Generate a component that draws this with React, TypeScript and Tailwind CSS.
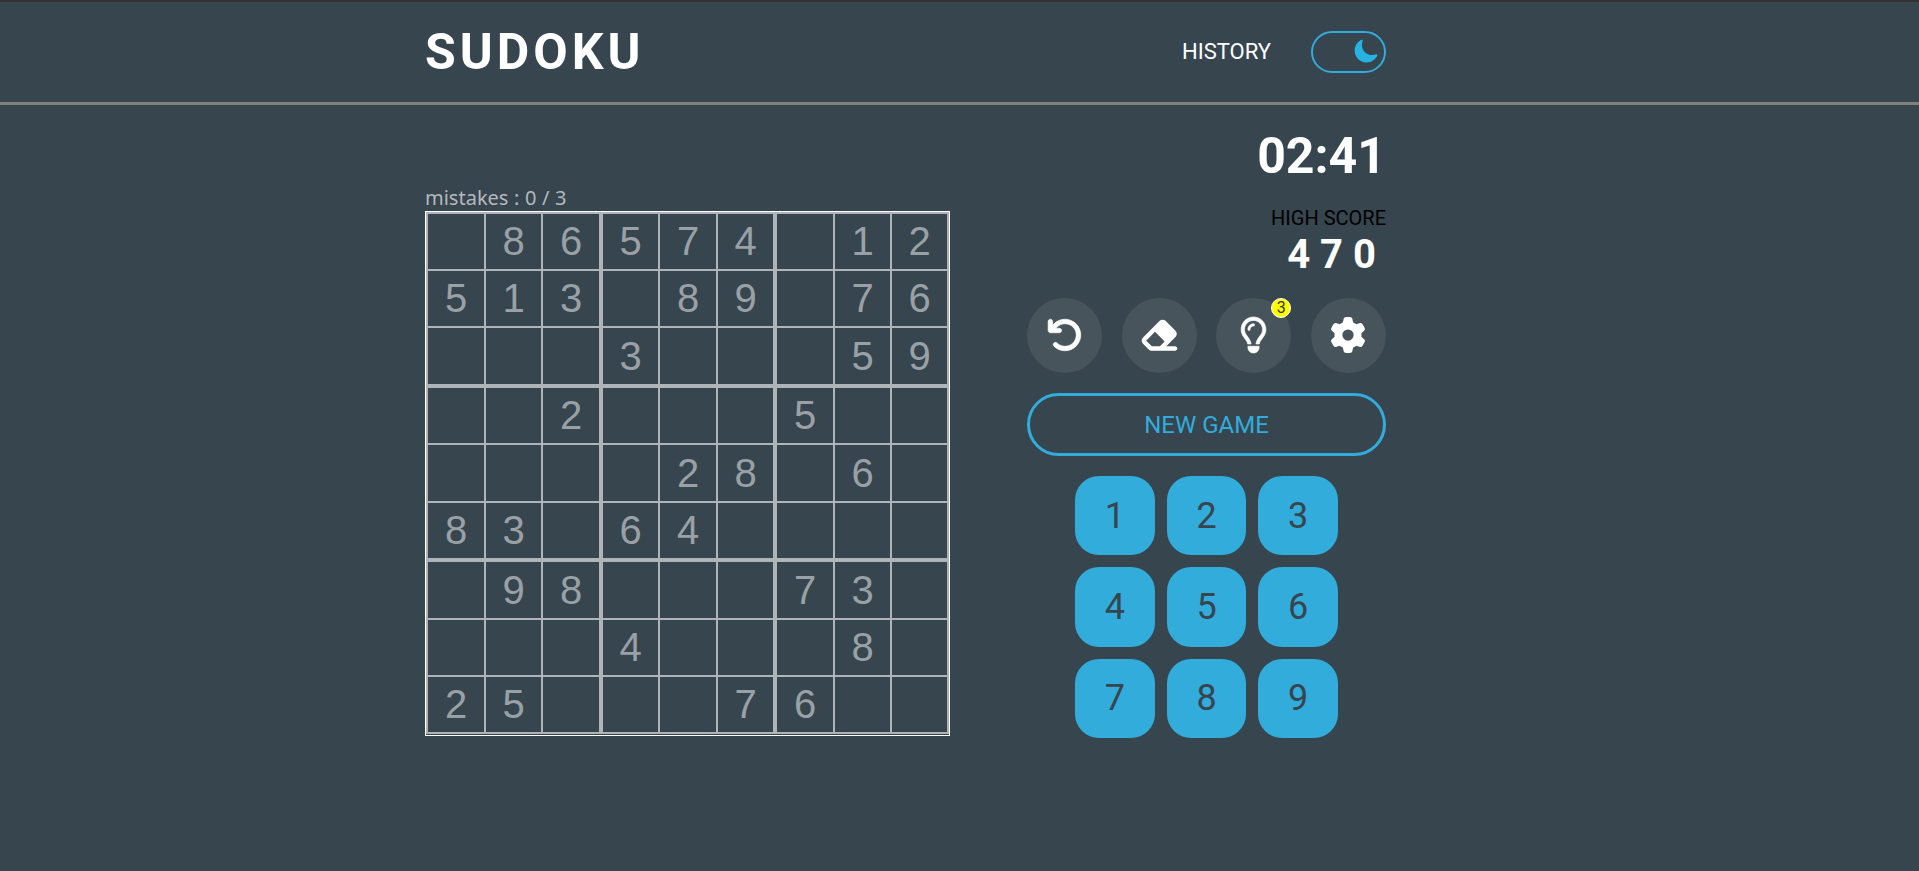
import type { ReactNode } from "react";
import { FaArrowRotateLeft, FaEraser, FaGear } from "react-icons/fa6";
import { IoMoon } from "react-icons/io5";

const board = [
  " 86574 12",
  "513 89 76",
  "   3   59",
  "  2   5  ",
  "    28 6 ",
  "83 64    ",
  " 98   73 ",
  "   4   8 ",
  "25   76  ",
];

function Bulb() {
  return (
    <svg
      viewBox="0 0 384 512"
      fill="currentColor"
      stroke="currentColor"
      strokeWidth="9"
      className="h-9 w-[27px] overflow-visible"
    >
      <path d="M297.2 248.9C311.6 228.3 320 203.2 320 176c0-70.7-57.3-128-128-128S64 105.300 64 176c0 27.200 8.400 52.300 22.800 72.900c3.700 5.300 8.100 11.300 12.800 17.700c12.900 17.700 28.300 38.900 39.800 59.800c10.400 19 15.700 38.800 18.300 57.500L109 384c-2.200-12-5.900-23.700-11.800-34.500c-9.900-18-22.200-34.900-34.500-51.800c-5.200-7.100-10.400-14.200-15.400-21.400C27.600 247.900 16 213.300 16 176C16 78.800 94.800 0 192 0s176 78.800 176 176c0 37.300-11.600 71.900-31.400 100.300c-5 7.200-10.200 14.300-15.400 21.400c-12.300 16.800-24.600 33.700-34.500 51.800c-5.900 10.800-9.600 22.500-11.800 34.500l-48.600 0c2.600-18.700 7.900-38.600 18.300-57.500c11.500-20.900 26.900-42.100 39.800-59.800c4.700-6.400 9-12.400 12.700-17.700zM192 128c-26.500 0-48 21.500-48 48c0 8.800-7.200 16-16 16s-16-7.200-16-16c0-44.200 35.800-80 80-80c8.800 0 16 7.200 16 16s-7.200 16-16 16zm0 384c-44.200 0-80-35.800-80-80l0-16 160 0 0 16c0 44.200-35.800 80-80 80z" />
    </svg>
  );
}

function RoundButton({ label, children }: { label: string; children: ReactNode }) {
  return (
    <button
      aria-label={label}
      className="relative flex size-[75px] items-center justify-center rounded-full bg-[#47545b] pb-0.5 text-white"
    >
      {children}
    </button>
  );
}

export default function App() {
  return (
    <div className="h-[871px] overflow-hidden bg-[#37454f] font-['Roboto',sans-serif] text-white">
      <header className="flex h-[105px] border-t-2 border-b-3 border-t-[#333333] border-b-[#808080] pl-[425px]">
        <div className="flex w-[961px] items-center justify-between">
          <h1 className="text-[50px] leading-none font-bold tracking-[4px]">SUDOKU</h1>
          <nav className="flex items-center gap-10">
            <span className="text-[22px] leading-none">HISTORY</span>
            <button
              aria-label="Dark mode"
              className="flex h-[42px] w-[75px] items-center justify-end rounded-full border-2 border-[#32acdb] pr-[5px] pb-[3px] text-[#25b4e2]"
            >
              <IoMoon size={26} />
            </button>
          </nav>
        </div>
      </header>

      <main className="ml-[425px] flex w-[961px] justify-between">
        <section className="w-[525px] pt-20">
          <p className="h-[26px] font-['Noto_Sans',sans-serif] text-[20px] leading-[26px] [word-spacing:0.4px] text-[#b4b9bd]">
            mistakes : 0 / 3
          </p>
          <div className="h-[525px] w-[525px] border border-white">
            <div className="grid h-[522px] w-[523px] grid-cols-[58px_57px_60px_57px_58px_59px_58px_57px_57px] grid-rows-[57px_57px_60px_57px_58px_59px_58px_57px_57px] border-t-2 border-l-2 border-[#afb4b8]">
              {board.flatMap((row, r) =>
                row.split("").map((value, c) => (
                  <div
                    key={`${r}-${c}`}
                    className={`flex items-center justify-center border-[#afb4b8] pb-px font-['Liberation_Sans',Arial,sans-serif] text-[40px] leading-none text-[#9aa1a6] ${
                      c === 2 || c === 5 ? "border-r-4" : "border-r-2"
                    } ${r === 2 || r === 5 ? "border-b-4" : "border-b-2"}`}
                  >
                    {value.trim()}
                  </div>
                )),
              )}
            </div>
          </div>
        </section>

        <aside className="flex w-[359px] flex-col">
          <div className="flex flex-col items-end">
            <time className="mt-[26px] text-[50px] leading-[50px] font-bold">02:41</time>
            <p className="mt-[27px] text-[20px] leading-5 text-black">HIGH SCORE</p>
            <p className="mt-[6px] text-[40px] leading-[41px] font-bold tracking-[10px]">470</p>
          </div>

          <div className="mt-[23px] flex justify-between">
            <RoundButton label="Undo">
              <FaArrowRotateLeft size={36} strokeWidth={9} stroke="currentColor" />
            </RoundButton>
            <RoundButton label="Erase">
              <FaEraser className="h-9 w-[40.5px]" />
            </RoundButton>
            <RoundButton label="Hint">
              <Bulb />
              <span className="absolute top-0 right-0 flex size-5 items-center justify-center rounded-full border border-white bg-[#ffff00] text-[16px] leading-none text-[#333333]">
                3
              </span>
            </RoundButton>
            <RoundButton label="Settings">
              <FaGear size={36} />
            </RoundButton>
          </div>

          <button className="mt-5 h-[63px] rounded-full border-3 border-[#32acdb] pt-px text-[24px] leading-none text-[#32acdb]">
            NEW GAME
          </button>

          <div className="mt-5 grid h-[262px] w-[263px] grid-cols-3 grid-rows-3 gap-3 self-center">
            {[1, 2, 3, 4, 5, 6, 7, 8, 9].map((n) => (
              <button
                key={n}
                className="rounded-[24px] bg-[#32acdb] text-[36px] leading-none text-[#37454f]"
              >
                {n}
              </button>
            ))}
          </div>
        </aside>
      </main>
    </div>
  );
}
